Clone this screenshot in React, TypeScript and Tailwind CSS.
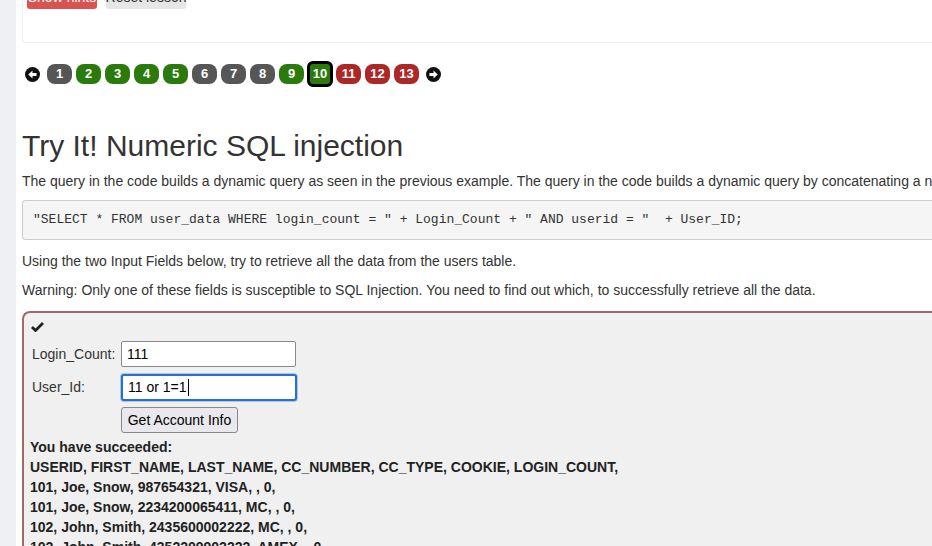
import React from "react";

const pages: { n: number; c: string }[] = [
  { n: 1, c: "gray" },
  { n: 2, c: "green" },
  { n: 3, c: "green" },
  { n: 4, c: "green" },
  { n: 5, c: "green" },
  { n: 6, c: "gray" },
  { n: 7, c: "gray" },
  { n: 8, c: "gray" },
  { n: 9, c: "green" },
  { n: 10, c: "cur" },
  { n: 11, c: "red" },
  { n: 12, c: "red" },
  { n: 13, c: "red" },
];

function Arrow({ dir }: { dir: "l" | "r" }) {
  return (
    <svg width="15" height="15" viewBox="0 0 16 16">
      <circle cx="8" cy="8" r="8" fill="#111" />
      {dir === "l" ? (
        <path d="M3.5 8 L8 3.8 L8 6.4 L12.3 6.4 L12.3 9.6 L8 9.6 L8 12.2 Z" fill="#fff" />
      ) : (
        <path d="M12.5 8 L8 3.8 L8 6.4 L3.7 6.4 L3.7 9.6 L8 9.6 L8 12.2 Z" fill="#fff" />
      )}
    </svg>
  );
}

function PageBtn({ n, c }: { n: number; c: string }) {
  if (c === "cur") {
    return (
      <div className="w-[26px] h-[26px] -mx-[1px] rounded-[6px] border-[3px] border-black bg-[#2a7a0c] flex items-center justify-center text-white font-bold text-[13px]">
        {n}
      </div>
    );
  }
  const bg = c === "gray" ? "bg-[#565656]" : c === "green" ? "bg-[#2a7a0c]" : "bg-[#ad2727]";
  return (
    <div className={`w-[25px] h-[20px] rounded-[8px] ${bg} flex items-center justify-center text-white font-bold text-[13px]`}>
      {n}
    </div>
  );
}

export default function App() {
  const rows = [
    "USERID, FIRST_NAME, LAST_NAME, CC_NUMBER, CC_TYPE, COOKIE, LOGIN_COUNT,",
    "101, Joe, Snow, 987654321, VISA, , 0,",
    "101, Joe, Snow, 2234200065411, MC, , 0,",
    "102, John, Smith, 2435600002222, MC, , 0,",
    "102, John, Smith, 4352209902222, AMEX, , 0,",
  ];
  return (
    <div className="w-[932px] h-[546px] overflow-hidden flex bg-white text-[#333]" style={{ fontFamily: '"Liberation Sans", Arial, sans-serif' }}>
      <div className="w-[16px] shrink-0 bg-[#eef0f4]" />
      <div className="flex-1 min-w-0 overflow-hidden pl-[6px]">
        {/* top card */}
        <div className="h-[43px] mt-0 border-b border-l border-[#eeeeee] rounded-bl-[4px] relative">
          <div className="absolute left-[4px] top-[-14px] flex gap-[9px]">
            <div className="h-[23px] w-[70px] bg-[#d9534f] text-white text-[14px] rounded-[3px] flex items-center justify-center whitespace-nowrap">Show hints</div>
            <div className="h-[23px] w-[80px] bg-[#e6e6e6] text-[#333] text-[14px] rounded-[3px] flex items-center justify-center whitespace-nowrap">Reset lesson</div>
          </div>
        </div>
        {/* pager */}
        <div className="flex items-center gap-[4px] mt-[17px] ml-[3px] h-[28px]">
          <div className="mr-[3px] flex"><Arrow dir="l" /></div>
          {pages.map((p) => (
            <PageBtn key={p.n} n={p.n} c={p.c} />
          ))}
          <div className="ml-[3px] flex"><Arrow dir="r" /></div>
        </div>
        {/* title */}
        <h1 className="mt-[40px] text-[30px] leading-[36px] font-normal text-[#333] whitespace-nowrap">Try It! Numeric SQL injection</h1>
        <p className="mt-[7px] text-[14px] leading-[20px] whitespace-nowrap">
          The query in the code builds a dynamic query as seen in the previous example. The query in the code builds a dynamic query by concatenating a number making it susceptible to Numeric SQL injection:
        </p>
        <div className="mt-[9px] h-[40px] bg-[#f5f5f5] border border-[#cccccc] rounded-l-[4px] border-r-0 flex items-center pl-[10px]">
          <pre className="text-[13px] text-[#333] whitespace-pre" style={{ fontFamily: '"Liberation Mono", monospace' }}>
            {'"SELECT * FROM user_data WHERE login_count = " + Login_Count + " AND userid = "  + User_ID;'}
          </pre>
        </div>
        <p className="mt-[11px] text-[14px] leading-[20px] whitespace-nowrap">Using the two Input Fields below, try to retrieve all the data from the users table.</p>
        <p className="mt-[9px] text-[14px] leading-[20px] whitespace-nowrap">Warning: Only one of these fields is susceptible to SQL Injection. You need to find out which, to successfully retrieve all the data.</p>
        <div className="mt-[11px] border-2 border-r-0 border-b-0 border-[#a06a6a] rounded-tl-[8px] bg-[#f0f0f0] pl-[6px] pt-[6px] h-[300px]">
          <div className="pl-[1px] h-[14px] flex items-center">
            <svg width="13" height="11" viewBox="0 0 13 11">
              <path d="M1 6 L4.5 9.5 L12 2" stroke="#222" strokeWidth="2.8" fill="none" strokeLinejoin="miter" />
            </svg>
          </div>
          <div className="flex items-center mt-[8px] h-[26px]">
            <span className="w-[91px] pl-[2px] text-[14px]">Login_Count:</span>
            <div className="w-[175px] h-[26px] border border-[#888] bg-white rounded-[2px] flex items-center pl-[5px] text-[14px] text-black">111</div>
          </div>
          <div className="flex items-center mt-[7px] h-[27px]">
            <span className="w-[91px] pl-[2px] text-[14px]">User_Id:</span>
            <div className="w-[176px] h-[27px] border-2 border-[#2a6fc9] bg-white rounded-[3px] flex items-center pl-[5px] text-[14px] text-black shadow-[0_0_0_1px_#a8c8f0]">
              11 or 1=1<span className="inline-block w-[1px] h-[17px] bg-black ml-[1px]" />
            </div>
          </div>
          <div className="flex mt-[6px]">
            <div className="ml-[91px] h-[26px] w-[117px] border border-[#888] rounded-[3px] bg-[#e9e9ed] flex items-center justify-center text-[14px] text-black">Get Account Info</div>
          </div>
          <div className="mt-[4px] pl-[0px] text-[14px] leading-[20px] font-bold text-[#222]">
            <div>You have succeeded:</div>
            {rows.map((r) => (
              <div key={r} className="whitespace-nowrap">{r}</div>
            ))}
          </div>
        </div>
      </div>
    </div>
  );
}
